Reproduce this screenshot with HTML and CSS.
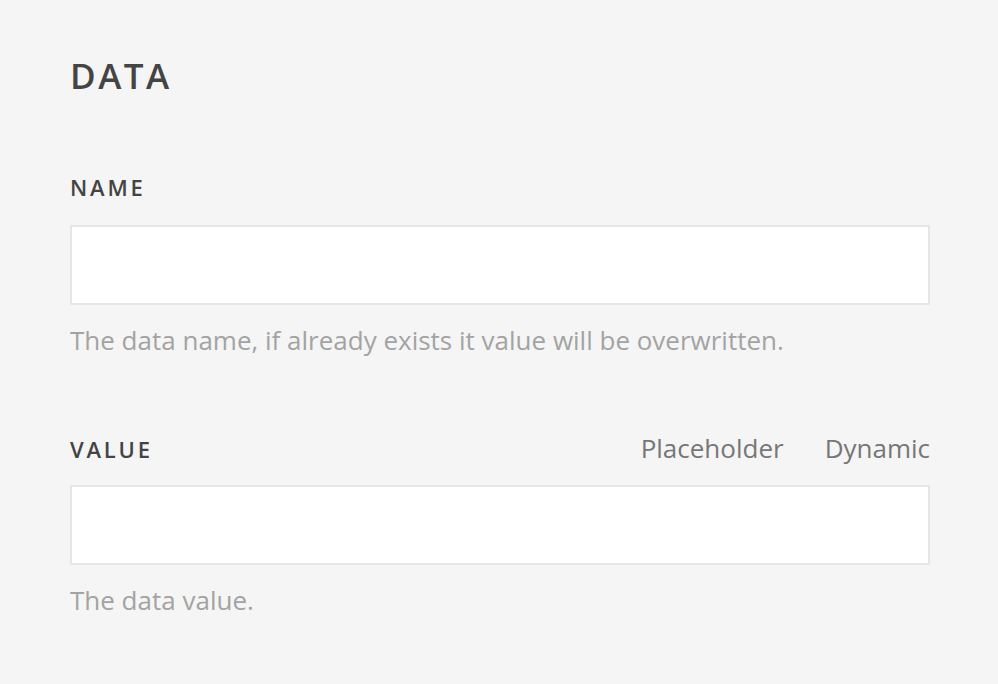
FILE: index.html
```html
<!DOCTYPE html>
<html>
<head>
<meta charset="utf-8">
<link rel="stylesheet" href="styles.css">
</head>
<body>
<div class="page">
  <h1 class="title">DATA</h1>
  <div class="field">
    <div class="field-head">
      <label class="label">NAME</label>
    </div>
    <div class="input"></div>
    <p class="help">The data name, if already exists it value will be overwritten.</p>
  </div>
  <div class="field">
    <div class="field-head">
      <label class="label">VALUE</label>
      <div class="links">
        <span class="link">Placeholder</span>
        <span class="link">Dynamic</span>
      </div>
    </div>
    <div class="input"></div>
    <p class="help">The data value.</p>
  </div>
</div>
</body>
</html>
```

FILE: styles.css
```css
html, body {
  margin: 0;
  padding: 0;
  background: #f5f5f5;
}
.page {
  padding: 56px 68px 0 70px;
  font-family: "Open Sans", "Liberation Sans", sans-serif;
}
.title {
  margin: 0;
  font-family: "Open Sans", sans-serif;
  font-weight: 600;
  font-size: 35px;
  line-height: 40px;
  letter-spacing: 2.5px;
  color: #444;
}
.field {
  margin-top: 76px;
}
.field + .field {
  margin-top: 76px;
}
.field-head {
  display: flex;
  justify-content: space-between;
  align-items: baseline;
  height: 53px;
}
.field + .field .field-head {
  height: 52px;
}
.label {
  font-weight: 600;
  font-size: 22px;
  line-height: 30px;
  letter-spacing: 2.8px;
  color: #444;
}
.links {
  display: flex;
  gap: 41px;
}
.link {
  font-size: 26px;
  line-height: 30px;
  color: #777;
}
.input {
  height: 76px;
  background: #fff;
  border: 2px solid #e6e6e6;
}
.help {
  margin: 18px 0 0 0;
  font-size: 26px;
  line-height: 34px;
  color: #a3a3a3;
}
```
